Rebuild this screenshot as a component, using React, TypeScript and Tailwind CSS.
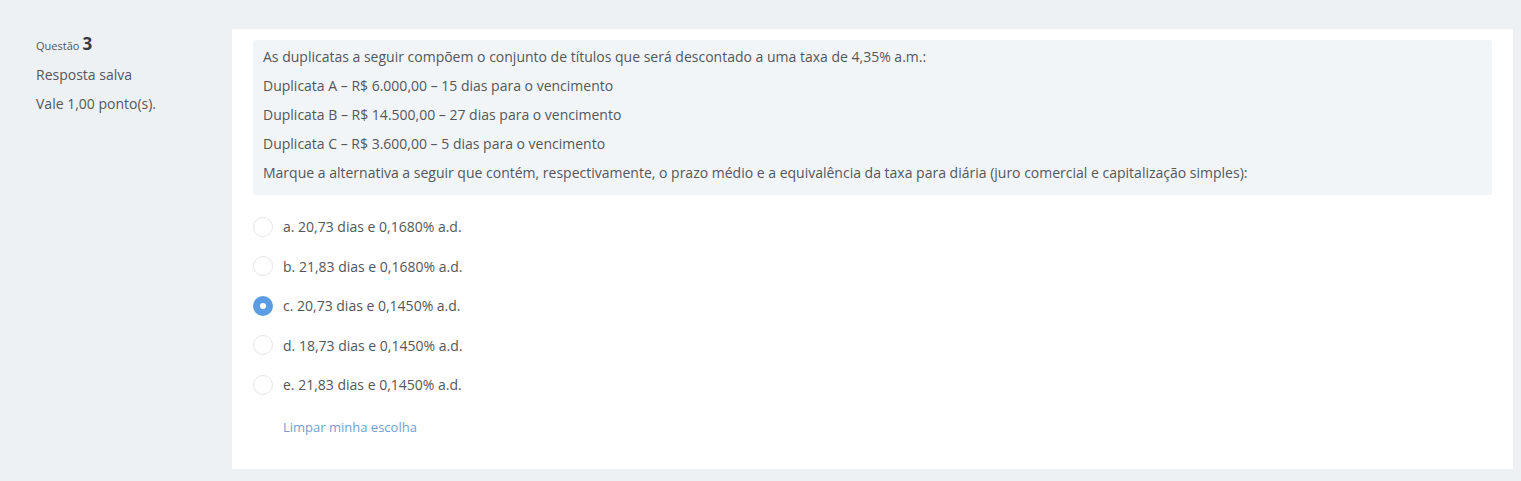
import React from "react";

const lines = [
  "As duplicatas a seguir compõem o conjunto de títulos que será descontado a uma taxa de 4,35% a.m.:",
  "Duplicata A – R$ 6.000,00 – 15 dias para o vencimento",
  "Duplicata B – R$ 14.500,00 – 27 dias para o vencimento",
  "Duplicata C – R$ 3.600,00 – 5 dias para o vencimento",
  "Marque a alternativa a seguir que contém, respectivamente, o prazo médio e a equivalência da taxa para diária (juro comercial e capitalização simples):",
];

const options = [
  { label: "a. 20,73 dias e 0,1680% a.d.", checked: false },
  { label: "b. 21,83 dias e 0,1680% a.d.", checked: false },
  { label: "c. 20,73 dias e 0,1450% a.d.", checked: true },
  { label: "d. 18,73 dias e 0,1450% a.d.", checked: false },
  { label: "e. 21,83 dias e 0,1450% a.d.", checked: false },
];

const Radio: React.FC<{ checked: boolean }> = ({ checked }) =>
  checked ? (
    <span className="flex h-[20px] w-[20px] items-center justify-center rounded-full bg-[#5b9de2]">
      <span className="h-[6px] w-[6px] rounded-full bg-white" />
    </span>
  ) : (
    <span className="h-[20px] w-[20px] rounded-full border border-[#e3e6e9] bg-white" />
  );

export default function App() {
  return (
    <div className="flex h-screen bg-[#eef1f3] pt-[29px] pr-[8px] font-['Open_Sans',sans-serif] text-[#53575c]">
      <div className="w-[232px] shrink-0 pl-[36px] pt-[5px]">
        <div className="flex items-baseline leading-[20px]">
          <span className="text-[11px]">Questão</span>
          <span className="ml-[3px] text-[17px] font-bold text-[#343a40]">3</span>
        </div>
        <div className="mt-[4px] text-[14px] leading-[29px]">Resposta salva</div>
        <div className="text-[14px] leading-[29px]">Vale 1,00 ponto(s).</div>
      </div>
      <div className="h-[440px] flex-1 bg-white px-[21px] pt-[11px]">
        <div className="rounded-[3px] bg-[#f2f5f8] pb-[8px] pl-[10px] pt-[2px] text-[14px] leading-[29px]">
          {lines.map((l) => (
            <p key={l}>{l}</p>
          ))}
        </div>
        <div className="mt-[12px]">
          {options.map((o) => (
            <div key={o.label} className="flex h-[39.5px] items-center gap-[10px] text-[14px]">
              <Radio checked={o.checked} />
              <span>{o.label}</span>
            </div>
          ))}
        </div>
        <div className="mt-[12px] pl-[30px] text-[13px] leading-[20px] text-[#6f9fd6]">Limpar minha escolha</div>
      </div>
    </div>
  );
}
